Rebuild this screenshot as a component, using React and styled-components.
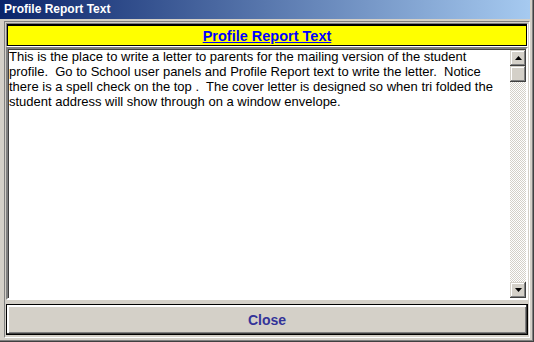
import styled, { createGlobalStyle } from 'styled-components'

const GlobalStyle = createGlobalStyle`
  html, body {
    margin: 0;
    padding: 0;
    background: #d4d0c8;
  }
  * {
    box-sizing: border-box;
  }
`

const Window = styled.div`
  width: 534px;
  height: 342px;
  display: flex;
  flex-direction: column;
  padding: 0 4px 4px 0;
  background-color: #d4d0c8;
  box-shadow: inset -1px -1px #404040, inset -2px -2px #808080;
  font-family: 'Liberation Sans', Arial, sans-serif;
`

const TitleBar = styled.div`
  height: 19px;
  flex: none;
  padding-left: 4px;
  background: linear-gradient(to right, #0a246a, #a6caf0);
  color: #fff;
  font-weight: 700;
  font-size: 12px;
  line-height: 19px;
`

const Body = styled.div`
  flex: 1;
  display: flex;
  padding: 2px 0 0 4px;
`

const Panel = styled.div`
  flex: 1;
  display: flex;
  flex-direction: column;
  padding: 1px;
  border: 1px solid;
  border-color: #808080 #fff #fff #808080;
`

const Header = styled.div`
  height: 24px;
  flex: none;
  display: flex;
  border: 1px solid;
  border-color: #808080 #fff #fff #808080;
`

const HeaderFill = styled.div`
  flex: 1;
  display: flex;
  align-items: center;
  justify-content: center;
  background-color: #ffff00;
  border: 1px solid #000;
  border-width: 2px 1px 1px 1px;
  color: #0000ff;
  font-weight: 700;
  font-size: 14.5px;
  text-decoration: underline;
  padding-top: 1px;
`

const TextBox = styled.div`
  height: 253px;
  flex: none;
  display: flex;
  border: 2px solid;
  border-color: #808080 #fff #fff #808080;
  box-shadow: inset 1px 1px #404040;
  background-color: #fff;
`

const TextBody = styled.div`
  flex: 1;
  padding: 0 0 0 1px;
  font-size: 13px;
  line-height: 15px;
  color: #000;
  white-space: pre;
`

const ScrollBar = styled.div`
  width: 16px;
  flex: none;
  margin: 1px 0 0 0;
  display: flex;
  flex-direction: column;
  background: repeating-conic-gradient(#fff 0 25%, #d4d0c8 0 50%) 0 0 / 2px 2px;
`

const ScrollButton = styled.div`
  height: 16px;
  flex: none;
  display: flex;
  align-items: center;
  justify-content: center;
  background-color: #d4d0c8;
  box-shadow: inset -1px -1px #404040, inset 1px 1px #d4d0c8,
    inset -2px -2px #808080, inset 2px 2px #fff;
`

const Track = styled.div`
  flex: 1;
`

const CloseButton = styled.button`
  margin-top: 4px;
  height: 31px;
  flex: none;
  border: 1px solid #000;
  background-color: #d4d0c8;
  box-shadow: inset -1px -1px #404040, inset 2px 2px #fff,
    inset -2px -2px #808080, inset 1px 1px #d4d0c8;
  font-family: 'Liberation Sans', Arial, sans-serif;
  font-weight: 700;
  font-size: 14px;
  color: #333399;
  padding: 0;
`

const Arrow = ({ down }) => (
  <svg width='7' height='4' viewBox='0 0 7 4'>
    {down ? (
      <polygon points='0,0 7,0 3.5,4' fill='#000' />
    ) : (
      <polygon points='0,4 7,4 3.5,0' fill='#000' />
    )}
  </svg>
)

const lines = [
  'This is the place to write a letter to parents for the mailing version of the student',
  'profile.  Go to School user panels and Profile Report text to write the letter.  Notice',
  'there is a spell check on the top .  The cover letter is designed so when tri folded the',
  'student address will show through on a window envelope.',
]

const App = () => {
  return (
    <>
      <GlobalStyle />
      <Window>
        <TitleBar>Profile Report Text</TitleBar>
        <Body>
          <Panel>
            <Header>
              <HeaderFill>Profile Report Text</HeaderFill>
            </Header>
            <TextBox>
              <TextBody>{lines.join('\n')}</TextBody>
              <ScrollBar>
                <ScrollButton>
                  <Arrow />
                </ScrollButton>
                <ScrollButton />
                <Track />
                <ScrollButton>
                  <Arrow down />
                </ScrollButton>
              </ScrollBar>
            </TextBox>
            <CloseButton>Close</CloseButton>
          </Panel>
        </Body>
      </Window>
    </>
  )
}

export default App
